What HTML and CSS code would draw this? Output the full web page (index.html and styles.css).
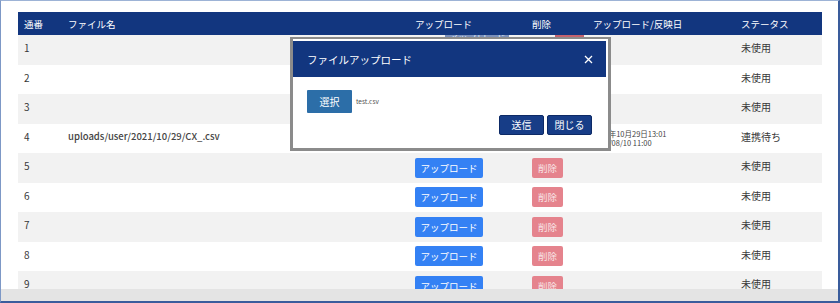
FILE: index.html
```html
<!DOCTYPE html>
<html lang="ja">
<head>
<meta charset="utf-8">
<link rel="stylesheet" href="styles.css">
</head>
<body>
<div class="frame">
  <div class="content">
    <table class="grid">
      <colgroup>
        <col class="c-no"><col class="c-file"><col class="c-up"><col class="c-del"><col class="c-date"><col class="c-status">
      </colgroup>
      <thead>
        <tr><th>通番</th><th>ファイル名</th><th>アップロード</th><th>削除</th><th>アップロード/反映日</th><th>ステータス</th></tr>
      </thead>
      <tbody>
        <tr><td>1</td><td></td><td></td><td></td><td></td><td>未使用</td></tr>
        <tr><td>2</td><td></td><td></td><td></td><td></td><td>未使用</td></tr>
        <tr><td>3</td><td></td><td></td><td></td><td></td><td>未使用</td></tr>
        <tr><td>4</td><td class="fname">uploads/user/2021/10/29/CX_.csv</td><td></td><td></td><td class="dates"><div>2021年10月29日13:01</div><div>2021/08/10 11:00</div></td><td>連携待ち</td></tr>
        <tr><td>5</td><td></td><td class="bc"><span class="btn-up">アップロード</span></td><td class="bc"><span class="btn-del">削除</span></td><td></td><td>未使用</td></tr>
        <tr><td>6</td><td></td><td class="bc"><span class="btn-up">アップロード</span></td><td class="bc"><span class="btn-del">削除</span></td><td></td><td>未使用</td></tr>
        <tr><td>7</td><td></td><td class="bc"><span class="btn-up">アップロード</span></td><td class="bc"><span class="btn-del">削除</span></td><td></td><td>未使用</td></tr>
        <tr><td>8</td><td></td><td class="bc"><span class="btn-up">アップロード</span></td><td class="bc"><span class="btn-del">削除</span></td><td></td><td>未使用</td></tr>
        <tr><td>9</td><td></td><td class="bc"><span class="btn-up">アップロード</span></td><td class="bc"><span class="btn-del">削除</span></td><td></td><td>未使用</td></tr>
      </tbody>
    </table>
  </div>
  <div class="hscroll"></div>

  <span class="ghost-up">アップロード</span>
  <span class="ghost-del"></span>

  <div class="modal">
    <div class="modal-head">
      <span class="modal-title">ファイルアップロード</span>
      <svg class="close" width="9" height="9" viewBox="0 0 9 9"><path d="M1 1 L8 8 M8 1 L1 8" stroke="#fff" stroke-width="1.3" fill="none"/></svg>
    </div>
    <div class="modal-body">
      <div class="pick">
        <span class="btn-pick">選択</span>
        <span class="fn">test.csv</span>
      </div>
      <div class="actions">
        <span class="btn-navy">送信</span>
        <span class="btn-navy">閉じる</span>
      </div>
    </div>
  </div>
</div>
</body>
</html>
```

FILE: styles.css
```css
* { box-sizing: border-box; }
html, body { margin: 0; padding: 0; background: #fff; }
body {
  font-family: "Noto Sans CJK JP", "Noto Sans", sans-serif;
  color: #333;
}
.frame {
  position: relative;
  width: 840px;
  height: 303px;
  border-top: 1px solid #9db3d6;
  border-left: 1px solid #7d98c6;
  border-right: 2px solid #3a5c9c;
  border-bottom: 2px solid #3a5c9c;
  display: flex;
  flex-direction: column;
  overflow: hidden;
}
.content {
  flex: 1;
  overflow: hidden;
  padding: 11px 0 0 17px;
}
.hscroll {
  height: 12px;
  background: #e4e4e4;
  flex: none;
}
.grid {
  width: 804px;
  table-layout: fixed;
  border-collapse: collapse;
}
.c-no { width: 44px; }
.c-file { width: 347px; }
.c-up { width: 117px; }
.c-del { width: 61px; }
.c-date { width: 148px; }
.c-status { width: 87px; }
.grid th {
  background: #12367f;
  color: #fff;
  font-weight: 400;
  font-size: 9.5px;
  text-align: left;
  height: 23px;
  padding: 0 0 0 6px;
}
.grid td {
  height: 29.5px;
  padding: 0 0 4px 6px;
  font-size: 10px;
  vertical-align: middle;
  white-space: nowrap;
  color: #383838;
}
.grid td.bc { padding-bottom: 0; }
.grid tbody tr:nth-child(odd) td { background: #f2f2f2; }
.grid tbody tr:nth-child(even) td { background: #fff; }
.grid td.fname { font-size: 9.5px; font-weight: 500; color: #444; }
.grid td.dates { padding: 0 0 0 5px; font-size: 7.5px; line-height: 9px; color: #444; }
.btn-up {
  display: inline-block;
  width: 68px;
  height: 20px;
  line-height: 20px;
  text-align: center;
  background: #3481f4;
  color: #fff;
  font-size: 9.5px;
  border-radius: 2px;
}
.btn-del {
  display: inline-block;
  width: 31px;
  height: 20px;
  line-height: 20px;
  text-align: center;
  background: #e5838d;
  color: #f8e4e6;
  font-size: 9.5px;
  border-radius: 2px;
}
.ghost-up {
  position: absolute;
  left: 444px;
  top: 34px;
  width: 64px;
  height: 7px;
  background: #7a8fba;
  color: #dfe6f3;
  font-size: 9.5px;
  line-height: 4px;
  overflow: hidden;
  text-align: center;
}
.ghost-del {
  position: absolute;
  left: 554px;
  top: 34px;
  width: 29px;
  height: 7px;
  background: #c4636f;
}
.modal {
  position: absolute;
  left: 289px;
  top: 36px;
  width: 321px;
  height: 114px;
  border: 3px solid #8b8b8b;
  border-top-width: 2px;
  background: #fff;
  display: flex;
  flex-direction: column;
}
.modal-head {
  margin-top: 2px;
  height: 36px;
  background: #12367f;
  display: flex;
  align-items: center;
  justify-content: space-between;
  padding: 0 13px 0 14px;
  margin-right: 2px;
}
.modal-title {
  color: #fff;
  font-size: 10.5px;
}
.modal-body {
  flex: 1;
  padding: 13px 14px 0 14px;
  display: flex;
  flex-direction: column;
  margin-right: 2px;
}
.pick { display: flex; align-items: center; gap: 4px; }
.btn-pick {
  display: inline-block;
  width: 45px;
  height: 23px;
  line-height: 23px;
  text-align: center;
  background: #2c6ea8;
  color: #fff;
  font-size: 10px;
  border-radius: 1px;
}
.fn { font-size: 6.5px; color: #555; margin-top: -2px; }
.actions {
  display: flex;
  justify-content: flex-end;
  gap: 3px;
  margin-top: 2px;
}
.btn-navy {
  display: inline-block;
  width: 45px;
  height: 20px;
  line-height: 18px;
  text-align: center;
  background: #173d87;
  border: 1px solid #0d2a66;
  color: #fff;
  font-size: 10px;
  border-radius: 2px;
}
```
